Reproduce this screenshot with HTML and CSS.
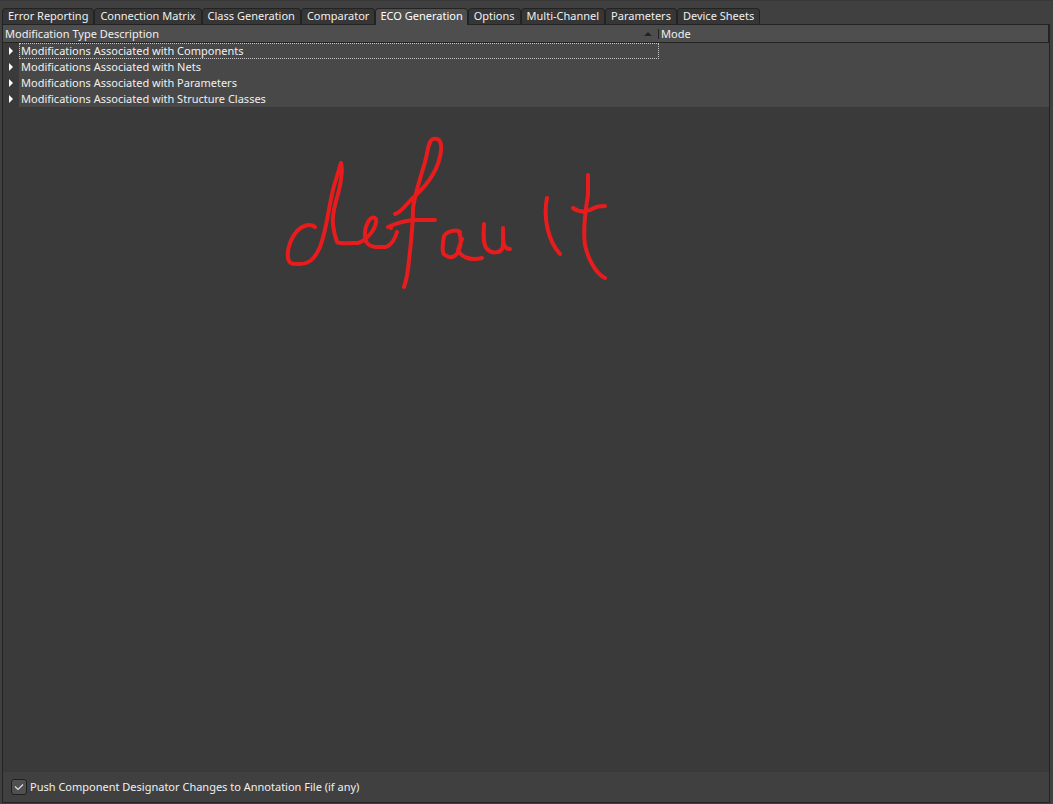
FILE: index.html
```html
<!DOCTYPE html>
<html lang="en">
<head>
<meta charset="utf-8">
<title>Project Options</title>
<link rel="stylesheet" href="styles.css">
</head>
<body>
<main class="options">
  <div class="tabs" role="tablist">
    <button class="tab" role="tab">Error Reporting</button>
    <button class="tab" role="tab">Connection Matrix</button>
    <button class="tab" role="tab">Class Generation</button>
    <button class="tab" role="tab">Comparator</button>
    <button class="tab tab-active" role="tab" aria-selected="true">ECO Generation</button>
    <button class="tab" role="tab">Options</button>
    <button class="tab" role="tab">Multi-Channel</button>
    <button class="tab" role="tab">Parameters</button>
    <button class="tab" role="tab">Device Sheets</button>
  </div>
  <section class="panel" role="tabpanel">
    <div class="list">
      <table class="grid">
        <colgroup>
          <col class="col-toggle">
          <col class="col-name">
          <col>
        </colgroup>
        <thead>
          <tr>
            <th class="col-description" colspan="2"><div class="heading"><span>Modification Type Description</span><svg class="sort" viewBox="0 0 8 4" aria-hidden="true"><path d="M0 4 4 0 8 4Z"/></svg></div></th>
            <th class="col-mode"><div class="heading">Mode</div></th>
          </tr>
        </thead>
        <tbody>
          <tr>
            <td class="toggle-cell"><button class="toggle" aria-label="Expand Components"><svg viewBox="0 0 4 8"><path d="M0 0 4 4 0 8Z"/></svg></button></td>
            <td class="name name-focused">Modifications Associated with Components</td>
            <td></td>
          </tr>
          <tr>
            <td class="toggle-cell"><button class="toggle" aria-label="Expand Nets"><svg viewBox="0 0 4 8"><path d="M0 0 4 4 0 8Z"/></svg></button></td>
            <td class="name">Modifications Associated with Nets</td>
            <td></td>
          </tr>
          <tr>
            <td class="toggle-cell"><button class="toggle" aria-label="Expand Parameters"><svg viewBox="0 0 4 8"><path d="M0 0 4 4 0 8Z"/></svg></button></td>
            <td class="name">Modifications Associated with Parameters</td>
            <td></td>
          </tr>
          <tr>
            <td class="toggle-cell"><button class="toggle" aria-label="Expand Structure Classes"><svg viewBox="0 0 4 8"><path d="M0 0 4 4 0 8Z"/></svg></button></td>
            <td class="name">Modifications Associated with Structure Classes</td>
            <td></td>
          </tr>
        </tbody>
      </table>
      <svg class="handwriting" viewBox="280 130 340 170" role="img" aria-label="Handwritten note: default">
        <path d="M315 227C311 223 303 225 297 231C290 239 287 250 288 258C289 264 292 264 299 264C310 264 315 258 320 247C327 229 329 204 334 186L341 163C343 168 341 184 338 194C334 207 332 217 333 225C334 233 336 239 337 242C340 244 352 243 358 243C365 241 375 231 376 222C377 216 371 216 368 222C364 229 364 238 367 243C371 248 378 247 386 247C391 245 395 239 397 232"/>
        <path d="M395 214C402 212 405 205 415 196C428 184 439 168 441 151C442 141 439 138 433 139C428 141 428 152 425 162C420 179 415 194 413 208C413 226 411 243 409 260C408 272 407 279 404 287"/>
        <path d="M388 227C397 223 406 220 416 220H435M391 227V228"/>
        <path d="M460 232C457 229 447 231 444 236C443 242 441 253 445 255C450 259 457 258 460 247C461 242 461 236 459 232M462 239L458 250C461 257 470 261 482 258"/>
        <path d="M484 224C484 232 482 243 487 249C492 254 500 253 502 249C504 245 503 235 503 228C503 238 502 249 510 249"/>
        <path d="M547 198C543 217 548 241 560 254"/>
        <path d="M588 175V195C585 213 583 232 585 245C588 259 596 274 605 278M573 208C580 213 588 212 594 208C598 206 601 206 605 206"/>
      </svg>
    </div>
    <footer class="footer">
      <label class="option"><input class="check" type="checkbox" checked>Push Component Designator Changes to Annotation File (if any)</label>
    </footer>
  </section>
</main>
</body>
</html>
```
FILE: styles.css
```css
* { box-sizing: border-box; }

body {
  margin: 0;
  background: #404040;
  color: #f0f0f0;
  font: 11px/16px "Noto Sans", "Open Sans", sans-serif;
}

.options {
  display: flex;
  flex-direction: column;
  min-height: 100vh;
  padding: 7px 3px 1px 2px;
  border-top: 1px solid #383838;
}

.tabs { display: flex; }

.tab {
  height: 16px;
  padding: 0 5px 1px;
  border: 1px solid #232323;
  border-bottom: 0;
  border-radius: 4px 4px 0 0;
  background: #363636;
  color: inherit;
  font: inherit;
  line-height: 14px;
  white-space: nowrap;
}

.tab-active {
  height: 17px;
  margin-bottom: -1px;
  padding: 0 4px 2px;
  background: #4e4e4e;
  color: #fff;
  z-index: 1;
}

.panel {
  display: flex;
  flex: 1;
  flex-direction: column;
  border: 1px solid #232323;
}

.list {
  position: relative;
  flex: 1;
  background: #3a3a3a;
}

.grid {
  width: 100%;
  border-collapse: separate;
  border-spacing: 0;
  table-layout: fixed;
}

.grid th {
  height: 18px;
  padding: 0;
  border-bottom: 1px solid #232323;
  background: #4e4e4e;
  font-weight: 400;
  text-align: left;
}

.col-toggle { width: 16px; }
.col-name { width: 640px; }
.grid .col-mode { border-right: 1px solid #232323; }

.heading {
  display: flex;
  align-items: center;
  justify-content: space-between;
  height: 17px;
  padding: 0 7px 0 2px;
}

.col-description .heading {
  background: linear-gradient(#232323, #232323) right / 1px 10px no-repeat;
}

.sort {
  width: 8px;
  height: 4px;
  fill: #232323;
}

.grid td {
  height: 16px;
  padding: 0;
  background: #484848;
}

.grid .toggle-cell { background: #3a3a3a; }

.toggle {
  display: flex;
  align-items: center;
  justify-content: center;
  width: 16px;
  height: 16px;
  padding: 0;
  border: 0;
  background: none;
}

.toggle svg {
  width: 4px;
  height: 8px;
  fill: #fff;
}

.grid .name {
  padding-left: 2px;
  line-height: 16px;
}

.name-focused {
  outline: 1px dotted #c8c8c8;
  outline-offset: -1px;
}

.handwriting {
  position: absolute;
  top: 105px;
  left: 277px;
  width: 340px;
  height: 170px;
  fill: none;
  stroke: #e81c1c;
  stroke-width: 4;
  stroke-linecap: round;
  stroke-linejoin: round;
}

.footer {
  display: flex;
  padding: 7px 8px;
}

.option {
  display: flex;
  align-items: center;
  gap: 3px;
}

.check {
  width: 16px;
  height: 16px;
  margin: 0;
  appearance: none;
  border: 1px solid #202020;
  border-radius: 3px;
  background: #505050 url("data:image/svg+xml,%3Csvg xmlns='http://www.w3.org/2000/svg' viewBox='0 0 14 14'%3E%3Cpath d='M3 6.5l3 3 5-5' fill='none' stroke='%23e0e0e0' stroke-width='1.2'/%3E%3C/svg%3E") center / 14px 14px;
}
```
